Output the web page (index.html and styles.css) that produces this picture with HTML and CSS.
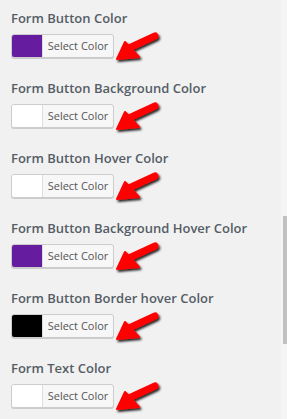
FILE: index.html
```html
<!DOCTYPE html>
<html>
  <head>
    <title>Form Colors</title>
    <link rel="stylesheet" href="styles.css">
  </head>
  <body>
    <div class="panel">
      <div class="field">
        <label>Form Button Color</label>
        <div class="picker-row">
          <button class="picker"><span class="swatch purple"></span><span class="picker-text">Select Color</span></button>
          <svg class="arrow" viewBox="0 0 50 34"><use href="#arrow-shape"/></svg>
        </div>
      </div>
      <div class="field">
        <label>Form Button Background Color</label>
        <div class="picker-row">
          <button class="picker"><span class="swatch white"></span><span class="picker-text">Select Color</span></button>
          <svg class="arrow" viewBox="0 0 50 34"><use href="#arrow-shape"/></svg>
        </div>
      </div>
      <div class="field">
        <label>Form Button Hover Color</label>
        <div class="picker-row">
          <button class="picker"><span class="swatch white"></span><span class="picker-text">Select Color</span></button>
          <svg class="arrow" viewBox="0 0 50 34"><use href="#arrow-shape"/></svg>
        </div>
      </div>
      <div class="field">
        <label>Form Button Background Hover Color</label>
        <div class="picker-row">
          <button class="picker"><span class="swatch purple"></span><span class="picker-text">Select Color</span></button>
          <svg class="arrow" viewBox="0 0 50 34"><use href="#arrow-shape"/></svg>
        </div>
      </div>
      <div class="field">
        <label>Form Button Border hover Color</label>
        <div class="picker-row">
          <button class="picker"><span class="swatch black"></span><span class="picker-text">Select Color</span></button>
          <svg class="arrow" viewBox="0 0 50 34"><use href="#arrow-shape"/></svg>
        </div>
      </div>
      <div class="field">
        <label>Form Text Color</label>
        <div class="picker-row">
          <button class="picker"><span class="swatch white"></span><span class="picker-text">Select Color</span></button>
          <svg class="arrow" viewBox="0 0 50 34"><use href="#arrow-shape"/></svg>
        </div>
      </div>
    </div>

    <div class="scrollbar"><div class="thumb"></div></div>

    <svg width="0" height="0" class="defs">
      <defs>
        <filter id="shadow" x="-20%" y="-20%" width="150%" height="150%">
          <feDropShadow dx="1.5" dy="2" stdDeviation="0.8" flood-color="#000" flood-opacity="0.85"/>
        </filter>
        <g id="arrow-shape" filter="url(#shadow)">
          <path d="M40 5 L14 17" stroke="#f00" stroke-width="7" stroke-linecap="round" fill="none"/>
          <path d="M2 28 L10 11 L24 26 Z" fill="#f00" stroke="#f00" stroke-width="2" stroke-linejoin="round"/>
        </g>
      </defs>
    </svg>
  </body>
</html>
```

FILE: styles.css
```css
body {
  margin: 0;
  padding: 0;
  background: #f1f1f1;
  font-family: "Open Sans", "Liberation Sans", sans-serif;
}

.panel {
  padding: 8px 0 0 11px;
}

.field {
  margin-bottom: 20px;
}

.field label {
  display: block;
  font-size: 13px;
  font-weight: 600;
  line-height: 20px;
  color: #555d66;
  margin-bottom: 6px;
}

.picker-row {
  display: flex;
  align-items: center;
  height: 24px;
}

.picker {
  display: flex;
  align-items: stretch;
  height: 24px;
  width: 103px;
  padding: 0;
  margin: 0;
  border: 1px solid #ccc;
  border-radius: 3px;
  background: #f7f7f7;
  box-shadow: 0 1px 0 #ccc;
  overflow: hidden;
  font-family: inherit;
  cursor: pointer;
}

.swatch {
  width: 30px;
  border-right: 1px solid #ddd;
}

.swatch.purple { background: #651c9e; }
.swatch.white { background: #fff; }
.swatch.black { background: #000; }

.picker-text {
  flex: 1;
  font-size: 11px;
  line-height: 22px;
  color: #555;
  text-align: center;
}

.arrow {
  width: 50px;
  height: 34px;
  margin: -3px 0 -7px 1px;
  flex: none;
}

.defs {
  position: absolute;
}

.scrollbar {
  position: absolute;
  top: 0;
  right: 0;
  width: 6px;
  height: 419px;
  background: #f5f5f5;
}

.thumb {
  margin: 216px 0 0 2px;
  width: 4px;
  height: 128px;
  background: #c1c1c1;
}
```
